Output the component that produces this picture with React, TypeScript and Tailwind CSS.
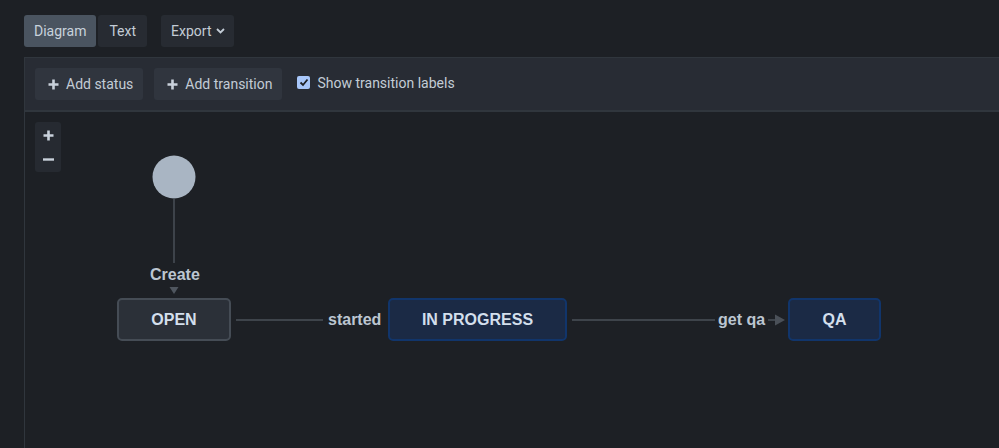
import { Fragment } from "react";

const font = { fontFamily: "Roboto, 'Liberation Sans', sans-serif" };

function Plus() {
    return (
        <svg width="11" height="11" viewBox="0 0 11 11" className="shrink-0">
            <path d="M5.5 0.5v10M0.5 5.5h10" stroke="#c9d1db" strokeWidth="2.6" />
        </svg>
    );
}

function Node({ label, x, w, active }: { label: string; x: number; w: number; active?: boolean }) {
    return (
        <div
            className={
                "absolute top-[186px] h-[43px] flex items-center justify-center rounded-[5px] border-2 text-[16px] font-bold text-[#d3dfec] " +
                (active ? "bg-[#1b2a45] border-[#11356b]" : "bg-[#2b3038] border-[#454c55]")
            }
            style={{ left: x, width: w, fontFamily: "'Liberation Sans', Arial, sans-serif" }}
        >
            {label}
        </div>
    );
}

export default function App() {
    return (
        <div className="w-[999px] h-[448px] bg-[#1d2025] overflow-hidden text-[#c3ccd6]" style={font}>
            <div className="flex pt-[15px] pl-[24px] h-[57px]">
                <div className="h-[32px] px-[10px] flex items-center rounded-[3px] bg-[#4a5460] text-[#c8d2dc] text-[14px]">Diagram</div>
                <div className="h-[32px] ml-[2px] px-[11px] flex items-center rounded-[3px] bg-[#272b32] text-[14px]">Text</div>
                <div className="h-[32px] ml-[14px] pl-[10px] pr-[9px] flex items-center gap-[4px] rounded-[3px] bg-[#272b32] text-[14px]">
                    Export
                    <svg width="9" height="6" viewBox="0 0 9 6">
                        <path d="M1 1l3.5 3.5L8 1" stroke="#c3ccd6" strokeWidth="1.8" fill="none" />
                    </svg>
                </div>
            </div>
            <div className="ml-[24px] border-l border-t border-[#30363d] h-[391px]">
                <div className="h-[54px] bg-[#282c34] border-b-2 border-[#30363d] flex items-center pl-[10px] gap-[11px] text-[14px]">
                    <div className="h-[32px] pl-[13px] pr-[10px] flex items-center gap-[7px] rounded-[3px] bg-[#30353e]">
                        <Plus />
                        <span>Add status</span>
                    </div>
                    <div className="h-[32px] pl-[13px] pr-[10px] flex items-center gap-[7px] rounded-[3px] bg-[#30353e]">
                        <Plus />
                        <span>Add transition</span>
                    </div>
                    <div className="flex items-center gap-[7px] ml-[4px] -mt-[2px]">
                        <div className="w-[13px] h-[13px] rounded-[2px] bg-[#a8c7fa] flex items-center justify-center -mt-[2px]">
                            <svg width="10" height="9" viewBox="0 0 10 9">
                                <path d="M1.5 4.5l2.5 2.5 4.5-5.5" stroke="#1d2025" strokeWidth="1.8" fill="none" />
                            </svg>
                        </div>
                        <span>Show transition labels</span>
                    </div>
                </div>
                <div className="relative h-[335px]">
                    <div className="absolute left-[10px] top-[10px] w-[26px] h-[50px] rounded-[3px] bg-[#262a31] flex flex-col items-center pt-[8px] gap-[17px]">
                        <Plus />
                        <svg width="11" height="3" viewBox="0 0 11 3">
                            <path d="M0 1.5h11" stroke="#c9d1db" strokeWidth="2.4" />
                        </svg>
                    </div>
                    <svg className="absolute left-0 top-0" width="975" height="335">
                        <circle cx="149" cy="65" r="21.5" fill="#a9b5c3" />
                        <path d="M149 86V151" stroke="#4f565f" strokeWidth="1.3" />
                        <path d="M144.5 175h9l-4.5 7z" fill="#4f565f" />
                        <path d="M211 208H298" stroke="#4a5058" strokeWidth="1.5" />
                        <path d="M547 208H690" stroke="#4a5058" strokeWidth="1.5" />
                        <path d="M743 208H752" stroke="#4a5058" strokeWidth="1.5" />
                        <path d="M750 202.5l10 5.5-10 5.5z" fill="#4a5058" />
                    </svg>
                    {[
                        { t: "Create", x: 125, y: 154 },
                        { t: "started", x: 303, y: 199 },
                        { t: "get qa", x: 693, y: 199 },
                    ].map((l) => (
                        <Fragment key={l.t}>
                            <div
                                className="absolute text-[16px] font-bold text-[#bcc6d1] leading-[18px]"
                                style={{ left: l.x, top: l.y, fontFamily: "'Liberation Sans', Arial, sans-serif" }}
                            >
                                {l.t}
                            </div>
                        </Fragment>
                    ))}
                    <Node label="OPEN" x={92} w={114} />
                    <Node label="IN PROGRESS" x={363} w={179} active />
                    <Node label="QA" x={763} w={93} active />
                </div>
            </div>
        </div>
    );
}
